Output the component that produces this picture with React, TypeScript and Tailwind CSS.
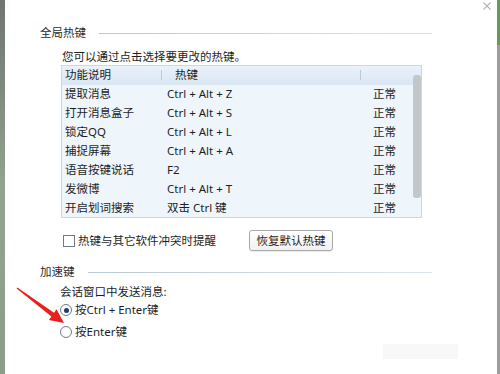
const hotkeys = [
  { name: '提取消息', key: 'Ctrl + Alt + Z', state: '正常' },
  { name: '打开消息盒子', key: 'Ctrl + Alt + S', state: '正常' },
  { name: '锁定QQ', key: 'Ctrl + Alt + L', state: '正常' },
  { name: '捕捉屏幕', key: 'Ctrl + Alt + A', state: '正常' },
  { name: '语音按键说话', key: 'F2', state: '正常' },
  { name: '发微博', key: 'Ctrl + Alt + T', state: '正常' },
  { name: '开启划词搜索', key: '双击 Ctrl 键', state: '正常' },
];

function SectionTitle({ label }: { label: string }) {
  return (
    <div className="flex h-[14px] items-center">
      <span className="text-[#2b2b2b]">{label}</span>
      <div className="ml-[13px] h-px flex-1 bg-gradient-to-r from-[#b9c8d6] via-[#c9d5e1] to-[#dde5ec]" />
    </div>
  );
}

export default function App() {
  return (
    <div
      className="relative flex h-[374px] w-[500px] overflow-hidden bg-white text-[11.5px] leading-[14px] text-[#1e1e1e]"
      style={{ fontFamily: '"Noto Sans", "Noto Sans CJK SC", sans-serif' }}
    >
      {/* desktop behind the window */}
      <div className="w-[5px] bg-gradient-to-b from-[#6f7671] via-[#93a38f] to-[#8c9d88]" />

      <div className="flex flex-1 flex-col">
        {/* close button */}
        <div className="flex h-[26px] justify-end pr-[6px] pt-[2px]">
          <svg width="8" height="8" viewBox="0 0 8 8" className="stroke-[#b4b4b4]">
            <path d="M0.5 0.5 L7.5 7.5 M7.5 0.5 L0.5 7.5" strokeWidth="1.1" fill="none" />
          </svg>
        </div>

        <div className="flex flex-col pl-[35px] pr-[65px]">
          <SectionTitle label="全局热键" />

          <div className="flex flex-col pl-[21px]">
            <div className="mt-[10px] pl-px">您可以通过点击选择要更改的热键。</div>

            {/* hotkey table */}
            <div className="relative mt-px flex h-[153px] w-[361px] flex-col border border-[#cbd8e4] bg-[#eef5fb]">
              <div className="flex h-[19px] items-center bg-gradient-to-b from-[#eaf2fa] to-[#d9e6f3]">
                <div className="w-[99px] pl-[3px]">功能说明</div>
                <div className="h-[10px] w-px bg-[#b8c9da]" />
                <div className="w-[198px] pl-[13px]">热键</div>
                <div className="h-[10px] w-px bg-[#b8c9da]" />
              </div>
              {hotkeys.map((h) => (
                <div key={h.name} className="flex h-[19px] items-center">
                  <div className="w-[99px] pl-[3px]">{h.name}</div>
                  <div className="w-[199px] pl-[6px]">{h.key}</div>
                  <div className="pl-[13px]">{h.state}</div>
                </div>
              ))}
              <div className="absolute left-[351px] top-[9px] h-[123px] w-[8px] rounded-[3px] bg-[#c2c7cc]" />
            </div>

            <div className="mt-[12px] flex h-[21px] items-center">
              <div className="flex w-[188px] items-center pl-[2px]">
                <div className="h-[12px] w-[12px] border border-[#707a84] bg-white" />
                <span className="ml-[3px]">热键与其它软件冲突时提醒</span>
              </div>
              <div className="flex h-[21px] w-[84px] items-center justify-center rounded-[3px] border border-[#a9a9a9] bg-gradient-to-b from-white to-[#f1f1f1] shadow-[0_1px_1px_rgba(0,0,0,0.08)]">
                恢复默认热键
              </div>
            </div>
          </div>

          <div className="mt-[14px]">
            <SectionTitle label="加速键" />
          </div>

          <div className="flex flex-col pl-[20px]">
            <div className="mt-[6px]">会话窗口中发送消息:</div>
            <div className="mt-[4px] flex h-[14px] items-center">
              <div className="flex h-[12px] w-[12px] items-center justify-center rounded-full border border-[#6f7d8b] bg-white">
                <div className="h-[5px] w-[5px] rounded-full bg-[#1d3f6e]" />
              </div>
              <span className="ml-[3px]">按Ctrl + Enter键</span>
            </div>
            <div className="mt-[8px] flex h-[14px] items-center">
              <div className="h-[12px] w-[12px] rounded-full border border-[#6f7d8b] bg-white" />
              <span className="ml-[3px]">按Enter键</span>
            </div>
          </div>
        </div>

        <div className="mt-[5px] flex justify-end pr-[39px]">
          <div className="h-[15px] w-[75px] bg-[#f8f8f8]" />
        </div>
      </div>

      {/* window edge */}
      <div className="flex w-[3px] flex-col">
        <div className="h-[45px] bg-[#5f9d4f]" />
        <div className="flex-1 bg-[#9d9d9d]" />
      </div>

      {/* annotation arrow */}
      <svg className="pointer-events-none absolute left-0 top-0" width="500" height="374">
        <polygon
          points="16.6,288.6 51.4,316.4 48.9,319.9 64,323 56.5,309.3 54,312.8 17.4,287.4"
          fill="#e8211c"
        />
      </svg>
    </div>
  );
}
